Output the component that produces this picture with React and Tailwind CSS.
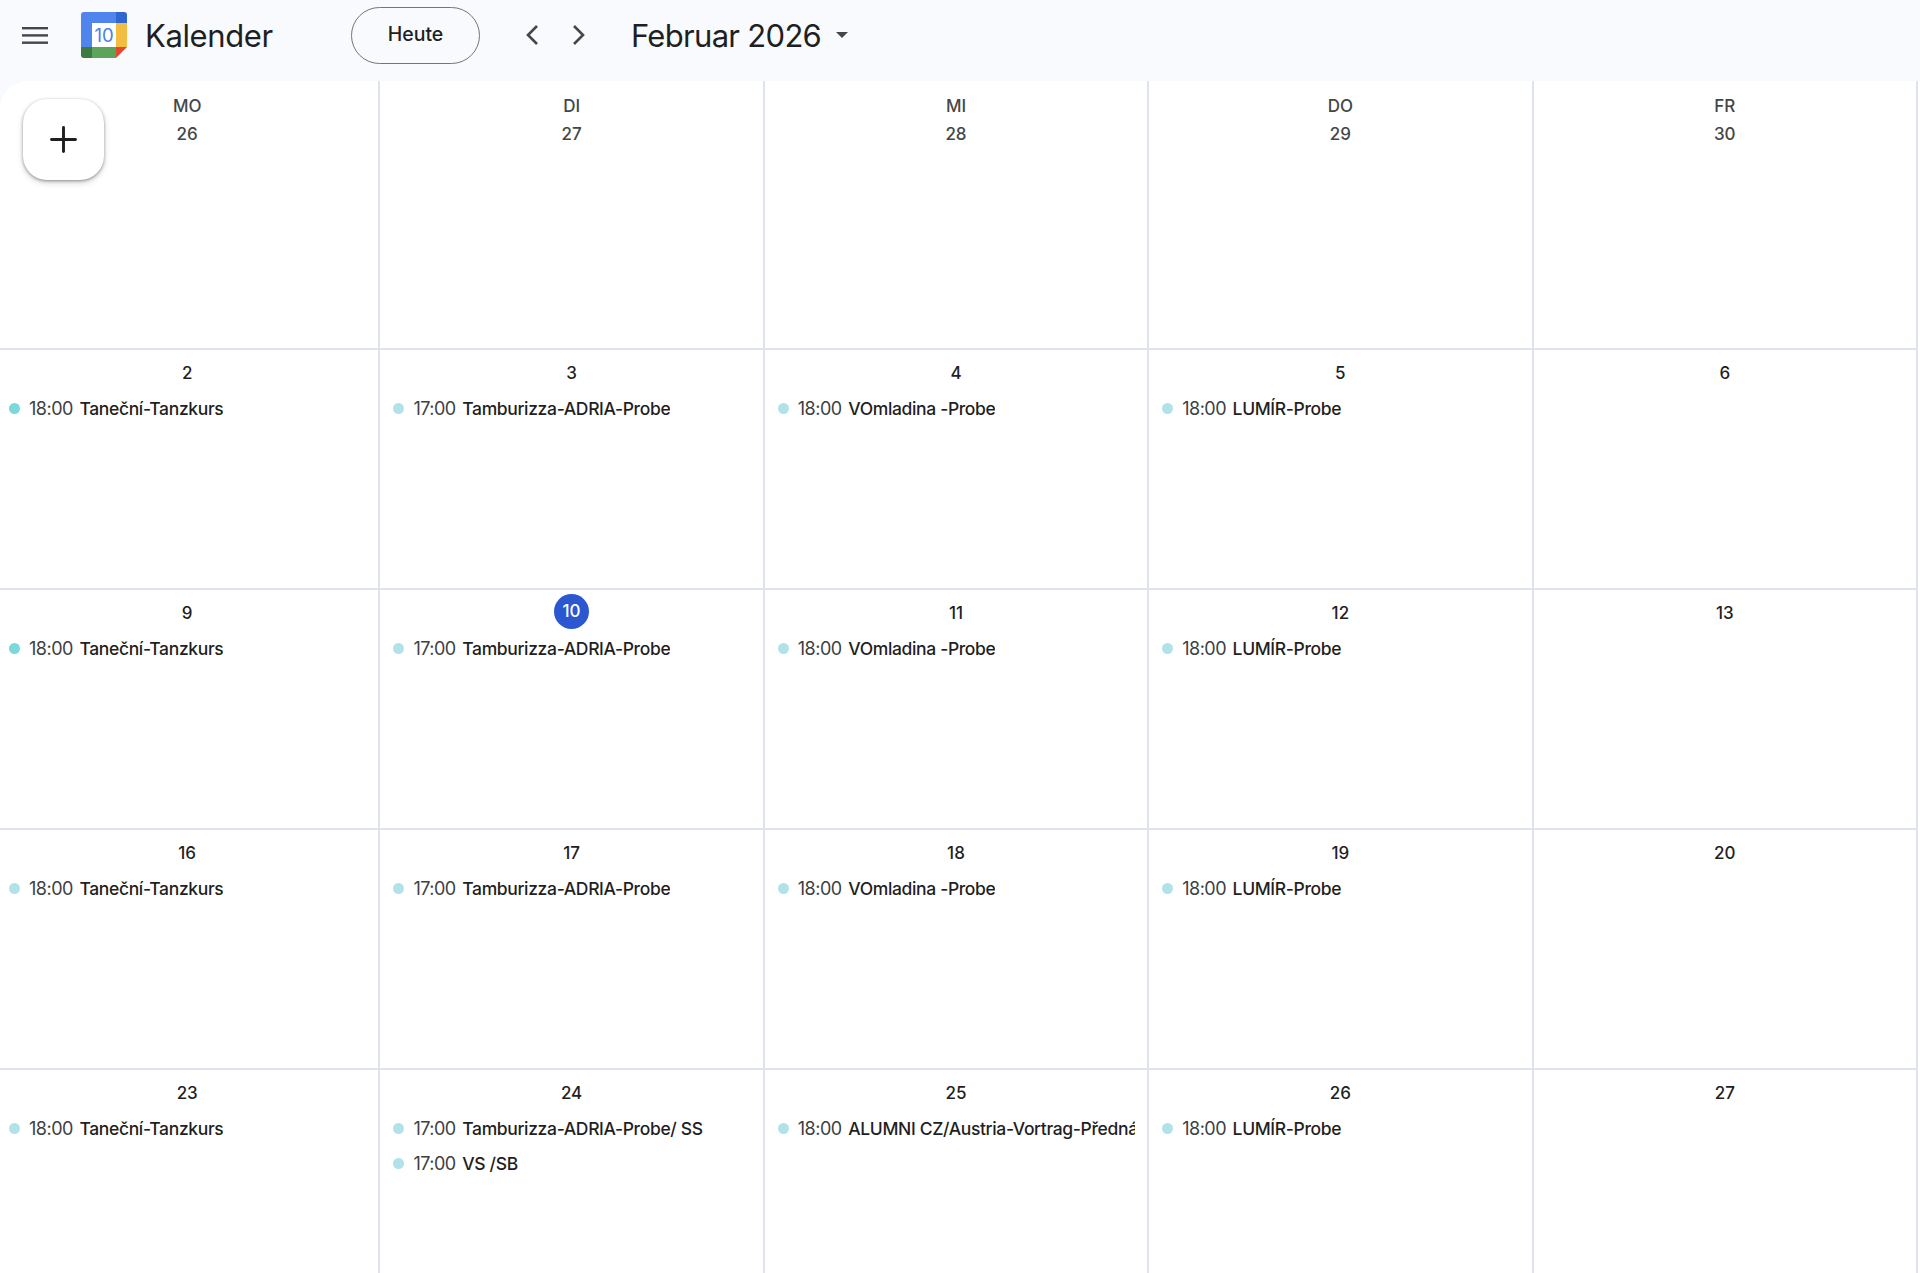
import { Plus } from "lucide-react";

const FONT = "font-['Inter','Liberation_Sans',sans-serif]";
const DARK = "bg-[#7bd8dd]";
const LIGHT = "bg-[#b0e2e8]";

const WEEKS = [
  { days: [2, 3, 4, 5, 6] },
  { days: [9, 10, 11, 12, 13] },
  { days: [16, 17, 18, 19, 20] },
  { days: [23, 24, 25, 26, 27], last: true },
];

const STANDARD = [
  [["18:00", "Taneční-Tanzkurs"]],
  [["17:00", "Tamburizza-ADRIA-Probe"]],
  [["18:00", "VOmladina -Probe"]],
  [["18:00", "LUMÍR-Probe"]],
  [],
];

const LAST = [
  [["18:00", "Taneční-Tanzkurs"]],
  [
    ["17:00", "Tamburizza-ADRIA-Probe/ SS"],
    ["17:00", "VS /SB"],
  ],
  [["18:00", "ALUMNI CZ/Austria-Vortrag-Přednáška"]],
  [["18:00", "LUMÍR-Probe"]],
  [],
];

function CalendarLogo() {
  return (
    <svg viewBox="0 0 46 46" className="w-[46px] h-[46px] shrink-0">
      <path d="M3 0h32v11H11v24H0V3a3 3 0 0 1 3-3z" fill="#5085ed" />
      <path d="M35 0h8a3 3 0 0 1 3 3v8H35z" fill="#2f66cf" />
      <rect x="35" y="11" width="11" height="24" fill="#f3bd42" />
      <rect x="11" y="35" width="24" height="11" fill="#5ca45a" />
      <path d="M0 35h11v11H3a3 3 0 0 1-3-3z" fill="#3c7a3f" />
      <path d="M35 35h11L35 46z" fill="#e2492f" />
      <rect x="11" y="11" width="24" height="24" fill="#fff" />
      <text
        x="23"
        y="29.5"
        textAnchor="middle"
        fontSize="18.5"
        fontFamily="Inter, sans-serif"
        fill="#4a80e8"
      >
        10
      </text>
    </svg>
  );
}

function Header() {
  return (
    <header className="flex items-center h-[81px] pb-[11px] bg-[#f8fafd] text-[#1f1f1f]">
      <svg viewBox="0 0 26 17" className="ml-[22px] w-[26px] h-[17px] shrink-0" fill="#444746">
        <rect width="26" height="2.4" />
        <rect y="7.2" width="26" height="2.4" />
        <rect y="14.5" width="26" height="2.4" />
      </svg>
      <div className="ml-[33px]">
        <CalendarLogo />
      </div>
      <span className="ml-[18px] w-[206px] text-[31px] leading-none tracking-[-0.4px]">Kalender</span>
      <button
        type="button"
        className="w-[129px] h-[57px] rounded-full border border-[#747775] text-[19.5px] font-medium"
      >
        Heute
      </button>
      <svg viewBox="0 0 14 22" className="ml-[45px] w-[14px] h-[22px] shrink-0" fill="none" stroke="#444746" strokeWidth="2.6">
        <path d="M12 2 3 11l9 9" />
      </svg>
      <svg viewBox="0 0 14 22" className="ml-[33px] w-[14px] h-[22px] shrink-0" fill="none" stroke="#444746" strokeWidth="2.6">
        <path d="m2 2 9 9-9 9" />
      </svg>
      <span className="ml-[45px] text-[31px] leading-none whitespace-nowrap tracking-[-0.7px]">Februar 2026</span>
      <svg viewBox="0 0 12 6" className="ml-[15px] w-[12px] h-[6px] shrink-0" fill="#444746">
        <path d="M0 0h12L6 6z" />
      </svg>
    </header>
  );
}

function EventRow({ time, title, dot }) {
  return (
    <div className="flex items-center h-[35px] pl-[13px] pr-[12px]">
      <span className={`w-[11px] h-[11px] rounded-full shrink-0 ${dot}`} />
      <span className="ml-[9px] text-[18px] text-[#1f1f1f] whitespace-nowrap overflow-hidden tracking-[-0.5px]">
        <span className="text-[#3c4043]">{time}</span>{" "}
        <span className="ml-[2px] text-[17.5px] font-medium tracking-[-0.35px]">{title}</span>
      </span>
    </div>
  );
}

function DayCell({ day, events, today, height }) {
  // only the first two Monday courses have the stronger dot
  const dot = day === 2 || day === 9 ? DARK : LIGHT;
  return (
    <div className={`border-r-2 border-b-2 border-[#dfe3ec] min-w-0 ${height}`}>
      <div className="flex justify-center items-center h-[35px] mt-[4px]">
        {today ? (
          <span className="flex items-center justify-center w-[35px] h-[35px] rounded-full bg-[#2b57d1] text-white text-[17px] font-medium">
            {day}
          </span>
        ) : (
          <span className="text-[17px] font-medium text-[#1f1f1f] translate-y-[2px]">{day}</span>
        )}
      </div>
      <div className="mt-[2px]">
        {events.map(([time, title]) => (
          <EventRow key={title} time={time} title={title} dot={dot} />
        ))}
      </div>
    </div>
  );
}

export default function App() {
  const heads = [
    ["MO", 26],
    ["DI", 27],
    ["MI", 28],
    ["DO", 29],
    ["FR", 30],
  ];

  return (
    <div className={`relative w-[1920px] h-[1273px] overflow-hidden bg-[#f8fafd] ${FONT}`}>
      <Header />
      <main className="bg-white rounded-tl-[28px] overflow-hidden h-[1192px]">
        <div className="grid grid-cols-[repeat(5,384.4px)] -ml-[4px] w-[1922px]">
          {heads.map(([name, num]) => (
            <div key={name} className="h-[269px] border-r-2 border-b-2 border-[#dfe3ec] text-center text-[#444746] pt-[14px]">
              <div className="text-[17px] leading-[22px] font-medium">{name}</div>
              <div className="text-[17px] leading-[22px] mt-[6px] font-medium">{num}</div>
            </div>
          ))}
          {WEEKS.map((week) =>
            week.days.map((day, i) => (
              <DayCell
                key={day}
                day={day}
                today={day === 10}
                height={week.last ? "h-[206px]" : "h-[240px]"}
                events={(week.last ? LAST : STANDARD)[i]}
              />
            ))
          )}
        </div>
      </main>
      <button
        type="button"
        className="absolute left-[23px] top-[99px] flex items-center justify-center w-[81px] h-[81px] rounded-[24px] bg-white shadow-[0_1px_3px_rgba(60,64,67,0.5),0_3px_6px_rgba(60,64,67,0.2)]"
      >
        <Plus size={41} strokeWidth={1.7} color="#1f1f1f" />
      </button>
    </div>
  );
}
